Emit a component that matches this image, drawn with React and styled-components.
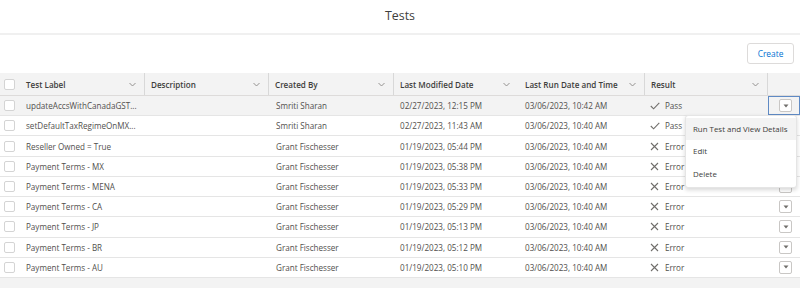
import React from "react";
import styled, { createGlobalStyle } from "styled-components";

const Global = createGlobalStyle`
  html, body { margin: 0; padding: 0; background: #ffffff; }
  body { font-family: "Open Sans", "Noto Sans", sans-serif; color: #3e3e3c; overflow: hidden; }
  * { box-sizing: border-box; }
`;

const COLS = "22px 123px 124px 125px 124px 127px 123px 32px";

const Page = styled.div`
  width: 800px;
  position: relative;
`;

const TitleBar = styled.div`
  height: 35px;
  border-bottom: 2px solid #f0f0f0;
  display: flex;
  align-items: center;
  justify-content: center;
  padding-bottom: 3px;
  font-size: 12.4px;
  color: #3e3e3c;
`;

const Toolbar = styled.div`
  height: 38px;
  display: flex;
  align-items: center;
  justify-content: flex-end;
  padding: 0 6px 2px 0;
`;

const Button = styled.button`
  height: 21px;
  width: 47px;
  background: #fff;
  border: 1px solid #dddbda;
  border-radius: 3px;
  color: #0070d2;
  font-family: inherit;
  font-size: 8.4px;
  padding: 0;
`;

const Row = styled.div`
  display: grid;
  grid-template-columns: ${COLS};
  height: ${(p) => (p.$header ? "23px" : "20.22px")};
  background: ${(p) => (p.$header ? "#f3f3f3" : p.$hover ? "#f3f3f3" : "#fff")};
  border-bottom: 1px solid ${(p) => (p.$header ? "#dddbda" : "#e5e5e5")};
  font-size: 8.1px;
  font-weight: ${(p) => (p.$header ? 600 : 400)};
  color: ${(p) => (p.$header ? "#3e3e3c" : "#514f4d")};
`;

const Cell = styled.div`
  display: flex;
  align-items: center;
  padding-left: ${(p) => p.$pl ?? 6}px;
  padding-right: 8px;
  border-right: ${(p) => (p.$sep ? "1px solid #d8d8d8" : "none")};
  white-space: nowrap;
  overflow: hidden;
  min-width: 0;
  position: relative;
`;

const HeadLabel = styled.span`
  flex: 1;
`;

const ActionCell = styled.div`
  display: flex;
  align-items: center;
  justify-content: flex-end;
  padding-right: 8px;
  position: relative;
  box-shadow: ${(p) => (p.$focus ? "inset 0 0 0 1px #5f8ac4" : "none")};
`;

const Check = styled.span`
  width: 11px;
  height: 11px;
  border: 1px solid #d4d4d4;
  border-radius: 2px;
  background: #fff;
  margin-left: 4px;
`;

const CheckCell = styled.div`
  display: flex;
  align-items: center;
`;

const MenuBtn = styled.span`
  width: 13px;
  height: 13px;
  border: 1px solid #c9c7c5;
  border-radius: 2px;
  background: #fff;
  display: flex;
  align-items: center;
  justify-content: center;
`;

const ResultIcon = styled.span`
  display: inline-flex;
  width: 10px;
  margin-right: 5px;
`;

const Menu = styled.div`
  position: absolute;
  left: 685px;
  top: 115px;
  width: 112px;
  padding: 2px 0;
  background: #fff;
  border: 1px solid #e5e5e5;
  border-radius: 3px;
  box-shadow: 0 2px 4px rgba(0, 0, 0, 0.16);
  z-index: 5;
`;

const MenuItem = styled.div`
  height: 22.3px;
  display: flex;
  align-items: center;
  padding-left: 7px;
  font-size: 7.9px;
  color: #3e3e3c;
  background: ${(p) => (p.$active ? "#f3f3f3" : "transparent")};
`;

const Footer = styled.div`
  height: 20px;
  background: #f3f3f3;
`;

const Chevron = () => (
  <svg width="7" height="5" viewBox="0 0 7 5">
    <path d="M0.5 1 L3.5 4 L6.5 1" fill="none" stroke="#8a8886" strokeWidth="0.9" />
  </svg>
);

const Caret = () => (
  <svg width="6" height="4" viewBox="0 0 6 4">
    <path d="M0.5 0.5 L5.5 0.5 L3 3.5 Z" fill="#706e6b" />
  </svg>
);

const CheckMark = () => (
  <svg width="10" height="8" viewBox="0 0 10 8">
    <path d="M0.8 4 L3.6 6.8 L9.3 0.8" fill="none" stroke="#706e6b" strokeWidth="1.1" />
  </svg>
);

const Cross = () => (
  <svg width="9" height="9" viewBox="0 0 9 9">
    <path d="M1 1 L8 8 M8 1 L1 8" fill="none" stroke="#706e6b" strokeWidth="1.1" />
  </svg>
);

const rows = [
  ["updateAccsWithCanadaGST...", "Smriti Sharan", "02/27/2023, 12:15 PM", "03/06/2023, 10:42 AM", "Pass"],
  ["setDefaultTaxRegimeOnMX...", "Smriti Sharan", "02/27/2023, 11:43 AM", "03/06/2023, 10:40 AM", "Pass"],
  ["Reseller Owned = True", "Grant Fischesser", "01/19/2023, 05:44 PM", "03/06/2023, 10:40 AM", "Error"],
  ["Payment Terms - MX", "Grant Fischesser", "01/19/2023, 05:38 PM", "03/06/2023, 10:40 AM", "Error"],
  ["Payment Terms - MENA", "Grant Fischesser", "01/19/2023, 05:33 PM", "03/06/2023, 10:40 AM", "Error"],
  ["Payment Terms - CA", "Grant Fischesser", "01/19/2023, 05:29 PM", "03/06/2023, 10:40 AM", "Error"],
  ["Payment Terms - JP", "Grant Fischesser", "01/19/2023, 05:13 PM", "03/06/2023, 10:40 AM", "Error"],
  ["Payment Terms - BR", "Grant Fischesser", "01/19/2023, 05:12 PM", "03/06/2023, 10:40 AM", "Error"],
  ["Payment Terms - AU", "Grant Fischesser", "01/19/2023, 05:10 PM", "03/06/2023, 10:40 AM", "Error"],
];

const headers = [
  { label: "Test Label", pl: 4, sep: true },
  { label: "Description", pl: 6, sep: true },
  { label: "Created By", pl: 6, sep: true },
  { label: "Last Modified Date", pl: 6, sep: false },
  { label: "Last Run Date and Time", pl: 7, sep: true },
  { label: "Result", pl: 6, sep: true },
];

export default function App() {
  return (
    <Page>
      <Global />
      <TitleBar>Tests</TitleBar>
      <Toolbar>
        <Button>Create</Button>
      </Toolbar>
      <Row $header>
        <CheckCell>
          <Check />
        </CheckCell>
        {headers.map((h) => (
          <Cell key={h.label} $pl={h.pl} $sep={h.sep}>
            <HeadLabel>{h.label}</HeadLabel>
            <Chevron />
          </Cell>
        ))}
        <ActionCell />
      </Row>
      {rows.map((r, i) => (
        <Row key={i} $hover={i === 0}>
          <CheckCell>
            <Check />
          </CheckCell>
          <Cell $pl={4}>{r[0]}</Cell>
          <Cell $pl={6}></Cell>
          <Cell $pl={7}>{r[1]}</Cell>
          <Cell $pl={6}>{r[2]}</Cell>
          <Cell $pl={7}>{r[3]}</Cell>
          <Cell $pl={5}>
            <ResultIcon>{r[4] === "Pass" ? <CheckMark /> : <Cross />}</ResultIcon>
            {r[4]}
          </Cell>
          <ActionCell $focus={i === 0}>
            <MenuBtn>
              <Caret />
            </MenuBtn>
          </ActionCell>
        </Row>
      ))}
      <Footer />
      <Menu>
        <MenuItem $active>Run Test and View Details</MenuItem>
        <MenuItem>Edit</MenuItem>
        <MenuItem>Delete</MenuItem>
      </Menu>
    </Page>
  );
}
